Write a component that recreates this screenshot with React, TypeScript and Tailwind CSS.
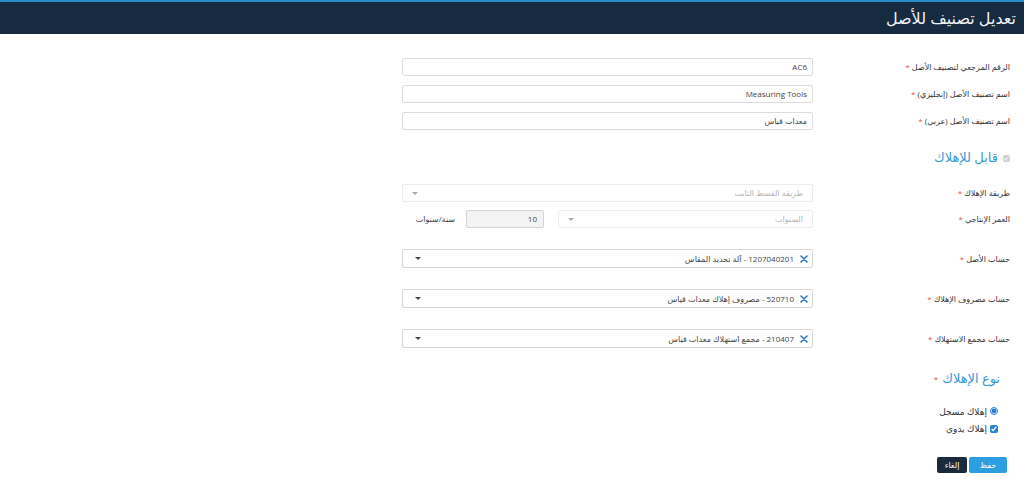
const FONT = "font-['Open_Sans','DejaVu_Sans','Noto_Sans',sans-serif]";

// label on the right, field on the left (rtl)
function Label({ text, required = true }: { text: string; required?: boolean }) {
  return (
    <div className="w-[197px] shrink-0 text-[8px] text-[#333]">
      {text} {required && <span className="text-[#e5534b]">*</span>}
    </div>
  );
}

function TextField({ value }: { value: string }) {
  return (
    <div className="flex h-[18px] w-[411px] items-center rounded-[2px] border border-[#dcdcdc] bg-white px-[5px] text-[8px] text-[#444]">
      {value}
    </div>
  );
}

function Caret({ className = '' }: { className?: string }) {
  return <span className={`inline-block h-0 w-0 border-x-[3px] border-t-[3px] border-x-transparent ${className}`} />;
}

function AccountSelect({ value }: { value: string }) {
  return (
    <div className="flex h-[19px] w-[411px] items-center rounded-[2px] border border-[#d6d6d6] bg-white pl-[12px] pr-[4px] text-[8px] text-[#444]">
      <svg width="8" height="8" viewBox="0 0 8 8" className="shrink-0">
        <path d="M1 1L7 7M7 1L1 7" stroke="#2a78cc" strokeWidth="1.6" strokeLinecap="round" />
      </svg>
      <span className="mr-[6px]">{value}</span>
      <Caret className="mr-auto border-t-[#444]" />
    </div>
  );
}

export default function App() {
  return (
    <div dir="rtl" className={`min-h-screen bg-white ${FONT}`}>
      <header className="flex h-[34px] items-center border-t-2 border-[#2a8bc6] bg-[#162a40] pr-[8px]">
        <h1 className="text-[16px] font-normal text-[#f2f4f6]">تعديل تصنيف للأصل</h1>
      </header>

      <div className="pr-[14px] pt-[24px]">
        <div className="flex flex-col gap-[9px]">
          <div className="flex items-center">
            <Label text="الرقم المرجعي لتصنيف الأصل" />
            <TextField value="AC6" />
          </div>
          <div className="flex items-center">
            <Label text="اسم تصنيف الأصل (إنجليزي)" />
            <TextField value="Measuring Tools" />
          </div>
          <div className="flex items-center">
            <Label text="اسم تصنيف الأصل (عربي)" />
            <TextField value="معدات قياس" />
          </div>
        </div>

        <div className="mt-[19px] flex h-[18px] items-center gap-[5px]">
          <input type="checkbox" checked disabled readOnly className="h-[7px] w-[7px]" />
          <span className="text-[13px] text-[#3a9ad9]">قابل للإهلاك</span>
        </div>

        <div className="mt-[17px] flex flex-col gap-[8px]">
          <div className="flex items-center">
            <Label text="طريقة الإهلاك" />
            <div className="flex h-[18px] w-[411px] items-center rounded-[2px] border border-[#ececec] bg-white px-[9px] text-[8px] text-[#b5b5b5]">
              <span>طريقة القسط الثابت</span>
              <Caret className="mr-auto border-t-[#aaa]" />
            </div>
          </div>
          <div className="flex items-center">
            <Label text="العمر الإنتاجي" />
            <div className="flex h-[18px] w-[255px] items-center rounded-[2px] border border-[#ececec] bg-white px-[9px] text-[8px] text-[#b5b5b5]">
              <span>السنوات</span>
              <Caret className="mr-auto border-t-[#aaa]" />
            </div>
            <div className="mr-[14px] flex h-[18px] w-[78px] items-center rounded-[2px] border border-[#d4d4d4] bg-[#f3f3f3] px-[6px] text-[8px] text-[#444]">
              10
            </div>
            <span className="mr-[11px] text-[8px] text-[#444]">سنة/سنوات</span>
          </div>
        </div>

        <div className="mt-[21px] flex flex-col gap-[21px]">
          <div className="flex items-center">
            <Label text="حساب الأصل" />
            <AccountSelect value="1207040201 - آلة تحديد المقاس" />
          </div>
          <div className="flex items-center">
            <Label text="حساب مصروف الإهلاك" />
            <AccountSelect value="520710 - مصروف إهلاك معدات قياس" />
          </div>
          <div className="flex items-center">
            <Label text="حساب مجمع الاستهلاك" />
            <AccountSelect value="210407 - مجمع استهلاك معدات قياس" />
          </div>
        </div>

        <div className="mt-[21px] flex items-center gap-[4px] pr-[10px]">
          <span className="text-[13px] text-[#3a9ad9]">نوع الإهلاك</span>
          <span className="text-[8px] text-[#e5534b]">*</span>
        </div>

        <div className="mt-[16px] flex flex-col gap-[4px] pr-[12px] text-[9px] text-[#333]">
          <label className="flex items-center gap-[3px]">
            <input type="radio" checked readOnly className="h-[8px] w-[8px] accent-[#2a7fd4]" />
            إهلاك مسجل
          </label>
          <label className="flex items-center gap-[3px]">
            <input type="checkbox" checked readOnly className="h-[8px] w-[8px] accent-[#2a7fd4]" />
            إهلاك يدوي
          </label>
        </div>

        <div className="mt-[21px] flex gap-[2px] pr-[3px]">
          <button className="h-[16px] w-[38px] rounded-[2px] bg-[#2d9ee0] text-[8px] text-white">حفظ</button>
          <button className="h-[16px] w-[30px] rounded-[2px] bg-[#1b2a3b] text-[8px] text-white">إلغاء</button>
        </div>
      </div>
    </div>
  );
}
